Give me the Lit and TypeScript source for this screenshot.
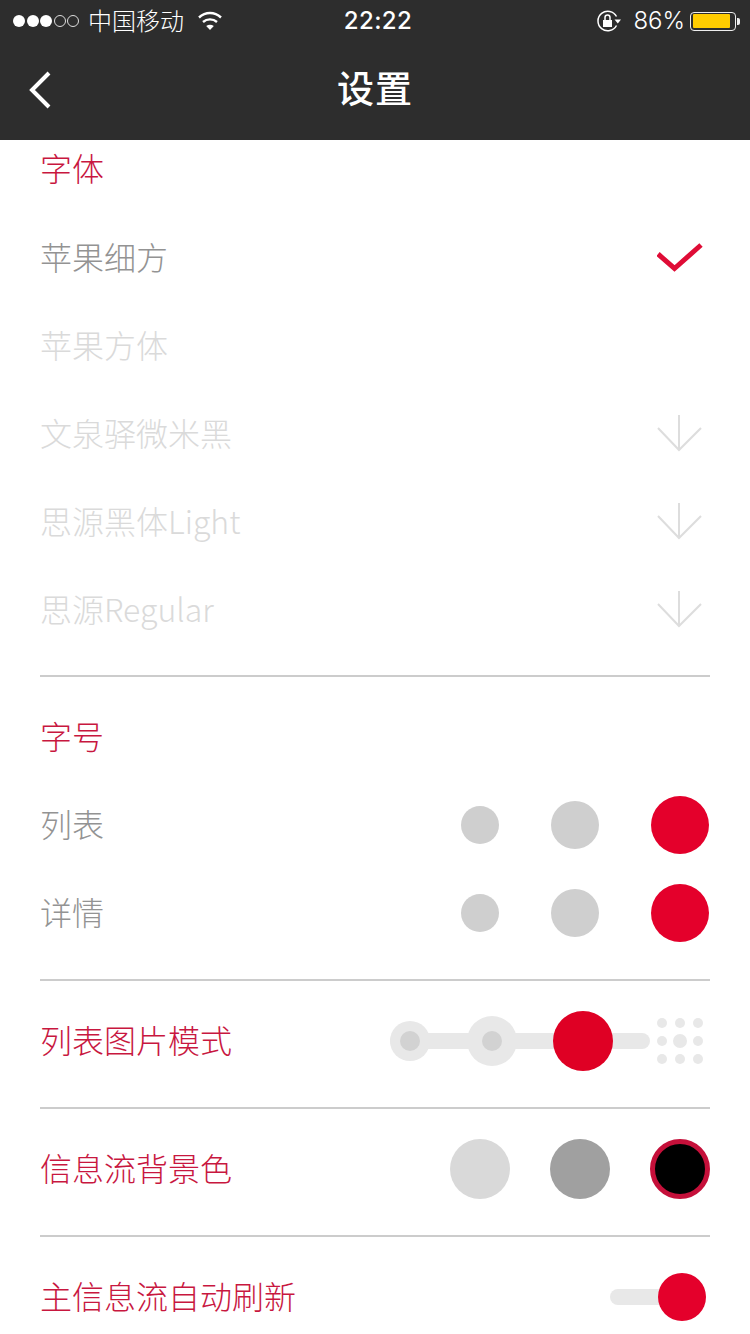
import { LitElement, html, css, svg } from "lit";
import { customElement } from "lit/decorators.js";

const FONTS = [
  { name: "苹果细方", state: "check" },
  { name: "苹果方体", state: "none" },
  { name: "文泉驿微米黑", state: "down" },
  { name: "思源黑体Light", state: "down" },
  { name: "思源Regular", state: "down" },
];

@customElement("app-root")
export class AppRoot extends LitElement {
  static styles = css`
    :host {
      display: block;
      width: 750px;
      height: 1334px;
      overflow: hidden;
      background: #fff;
      font-family: "Noto Sans CJK SC", "Noto Sans", sans-serif;
      font-weight: 300;
      color: #999;
    }
    .top { background: #2d2d2d; color: #fff; height: 140px; }
    .status {
      height: 40px;
      display: grid;
      grid-template-columns: 1fr auto 1fr;
      align-items: center;
      font-size: 24px;
      line-height: 40px;
    }
    .st-left { display: flex; align-items: center; padding-left: 13px; }
    .signal { display: flex; gap: 1.6px; width: 75px; }
    .sig { width: 12px; height: 12px; border-radius: 50%; background: #fff; box-sizing: border-box; }
    .sig.off { background: none; border: 1px solid #ddd; }
    .carrier { font-size: 24px; width: 110px; padding-bottom: 2px; }
    .time {
      font-family: "Inter", "Liberation Sans", sans-serif;
      font-weight: 500;
      font-size: 24px;
      letter-spacing: 0.4px;
      margin-left: 6px;
    }
    .st-right { display: flex; align-items: center; justify-content: flex-end; padding-right: 10px; }
    .pct {
      font-family: "Inter", "Liberation Sans", sans-serif;
      font-weight: 300;
      font-size: 24px;
      margin: 0 5px 0 12px;
    }
    .battery {
      width: 46px;
      height: 19px;
      box-sizing: border-box;
      border: 1.5px solid #eee;
      border-radius: 4px;
      padding: 1.5px;
      display: flex;
    }
    .battery i { display: block; width: 37px; background: #ffcc00; border-radius: 1px; }
    .tip { width: 3px; height: 7px; background: #eee; border-radius: 0 2px 2px 0; margin-left: 1px; }
    .nav { height: 100px; display: flex; align-items: center; padding-left: 28px; }
    .title {
      flex: 1;
      text-align: center;
      font-size: 37px;
      font-weight: 500;
      line-height: 94px;
      height: 100px;
      margin-right: 52px;
      letter-spacing: 1px;
    }

    .red { color: #c8173f; }
    .lift { padding-bottom: 5px; }
    .head {
      font-size: 32px;
      line-height: 55px;
      padding-left: 40px;
      height: 60px;
      margin-bottom: 14px;
    }
    .font-row {
      height: 88px;
      display: flex;
      align-items: center;
      justify-content: space-between;
      padding: 0 47px 0 40px;
      font-size: 32px;
      color: #939393;
    }
    .font-row.off { color: #dadada; }
    .rule { height: 2px; background: #cccccc; margin: 0 40px; }
    .r1 { margin-top: 21px; }
    .head2 { padding-top: 31px; margin-bottom: 13px; }
    .size-row {
      height: 88px;
      display: flex;
      align-items: center;
      padding: 0 41px 0 40px;
      font-size: 32px;
      color: #939393;
    }
    .size-row .lbl { flex: 1; }
    .sizes { display: flex; align-items: center; gap: 52px; }
    .c { border-radius: 50%; flex: none; }
    .s { width: 38px; height: 38px; background: #cfcfcf; }
    .m { width: 48px; height: 48px; background: #cfcfcf; }
    .l { width: 58px; height: 58px; background: #e4002b; }
    .r2 { margin-top: 22px; }

    .opt {
      display: flex;
      align-items: center;
      justify-content: space-between;
      padding: 30px 40px 36px;
      height: 60px;
      font-size: 32px;
    }
    .modes { display: flex; align-items: center; margin-right: 3px; }
    .slider { position: relative; width: 260px; height: 60px; display: flex; align-items: center; }
    .track {
      position: absolute;
      left: 0;
      right: 0;
      top: 22px;
      height: 16px;
      border-radius: 8px;
      background: #e8e8e8;
    }
    .knob {
      position: relative;
      border-radius: 50%;
      background: #e8e8e8;
      display: flex;
      align-items: center;
      justify-content: center;
      flex: none;
    }
    .knob i { display: block; width: 20px; height: 20px; border-radius: 50%; background: #d2d2d2; }
    .k1 { width: 40px; height: 40px; }
    .k2 { width: 50px; height: 50px; margin-left: 37px; }
    .k3 { width: 60px; height: 60px; margin-left: 36px; background: #df0024; }
    .dots {
      margin-left: 3px;
      width: 54px;
      height: 54px;
      display: grid;
      grid-template-columns: repeat(3, 1fr);
      grid-template-rows: repeat(3, 1fr);
      place-items: center;
    }
    .dots i { display: block; width: 10px; height: 10px; border-radius: 50%; background: #e8e8e8; }
    .dots i.mid { width: 14px; height: 14px; }
    .colors { display: flex; gap: 40px; }
    .swatch { width: 60px; height: 60px; box-sizing: border-box; border-radius: 50%; }
    .a { background: #d9d9d9; }
    .b { background: #a0a0a0; }
    .d { background: #000; border: 5px solid #c5103a; }
    .toggle { display: flex; align-items: center; margin-right: 4px; }
    .tog-track { width: 60px; height: 16px; border-radius: 8px 0 0 8px; background: #e8e8e8; margin-right: -12px; }
    .tog-knob { position: relative; width: 48px; height: 48px; border-radius: 50%; background: #e4002b; }
    svg { display: block; }
  `;

  private check() {
    return html`<svg width="46" height="30" viewBox="0 0 46 30" fill="none">
      ${svg`<path d="M1 11 L17.5 25.5 L44 2" stroke="#df0c36" stroke-width="5"/>`}
    </svg>`;
  }

  private down() {
    return html`<svg width="46" height="38" viewBox="0 0 46 38" fill="none" stroke="#dddddd" stroke-width="2">
      ${svg`<path d="M22 0 V35"/><path d="M1 13 L22 35 L44 13"/>`}
    </svg>`;
  }

  render() {
    return html`
      <div class="top">
        <div class="status">
          <div class="st-left">
            <div class="signal">
              <span class="sig"></span><span class="sig"></span><span class="sig"></span>
              <span class="sig off"></span><span class="sig off"></span>
            </div>
            <span class="carrier">中国移动</span>
            <svg width="24" height="20" viewBox="0 0 24 20" fill="none" stroke="#fff" stroke-width="2.4">
              ${svg`<path d="M1 6.5 C7.5 0.5 16.5 0.5 23 6.5"/><path d="M5 11 C9 7.5 15 7.5 19 11"/>
              <path d="M12 19 L8.2 15 C10.5 13.2 13.5 13.2 15.8 15 Z" fill="#fff" stroke="none"/>`}
            </svg>
          </div>
          <div class="time">22:22</div>
          <div class="st-right">
            <svg width="25" height="22" viewBox="0 0 25 22" fill="none" stroke="#fff" stroke-width="1.5">
              ${svg`<path d="M20.5 6.5 A9.8 9.8 0 1 0 20.5 15.5"/>
              <path d="M18.5 9.5 H25 L21.8 13.5 Z" fill="#fff" stroke="none"/>
              <rect x="7" y="10" width="9" height="7" fill="#fff" stroke="none"/>
              <path d="M9 10 V7.5 A2.5 2.5 0 0 1 14 7.5 V10"/>`}
            </svg>
            <span class="pct">86%</span>
            <div class="battery"><i></i></div>
            <div class="tip"></div>
          </div>
        </div>
        <div class="nav">
          <svg width="24" height="38" viewBox="0 0 24 38" fill="none" stroke="#fff" stroke-width="4">
            ${svg`<path d="M21 2 L4 19 L21 36"/>`}
          </svg>
          <div class="title">设置</div>
        </div>
      </div>

      <div class="head red">字体</div>
      ${FONTS.map(
        (f) => html`<div class="font-row ${f.state === "check" ? "" : "off"}">
          <span class="lift">${f.name}</span>
          ${f.state === "check" ? this.check() : f.state === "down" ? this.down() : ""}
        </div>`
      )}
      <div class="rule r1"></div>

      <div class="head head2 red">字号</div>
      ${["列表", "详情"].map(
        (l) => html`<div class="size-row">
          <span class="lbl lift">${l}</span>
          <div class="sizes">
            <div class="c s"></div>
            <div class="c m"></div>
            <div class="c l"></div>
          </div>
        </div>`
      )}
      <div class="rule r2"></div>

      <div class="opt">
        <span class="red lift">列表图片模式</span>
        <div class="modes">
          <div class="slider">
            <div class="track"></div>
            <div class="knob k1"><i></i></div>
            <div class="knob k2"><i></i></div>
            <div class="knob k3"></div>
          </div>
          <div class="dots">
            <i></i><i></i><i></i><i></i><i class="mid"></i><i></i><i></i><i></i><i></i>
          </div>
        </div>
      </div>
      <div class="rule"></div>

      <div class="opt">
        <span class="red lift">信息流背景色</span>
        <div class="colors">
          <div class="swatch a"></div>
          <div class="swatch b"></div>
          <div class="swatch d"></div>
        </div>
      </div>
      <div class="rule"></div>

      <div class="opt">
        <span class="red lift">主信息流自动刷新</span>
        <div class="toggle">
          <div class="tog-track"></div>
          <div class="tog-knob"></div>
        </div>
      </div>
    `;
  }
}
